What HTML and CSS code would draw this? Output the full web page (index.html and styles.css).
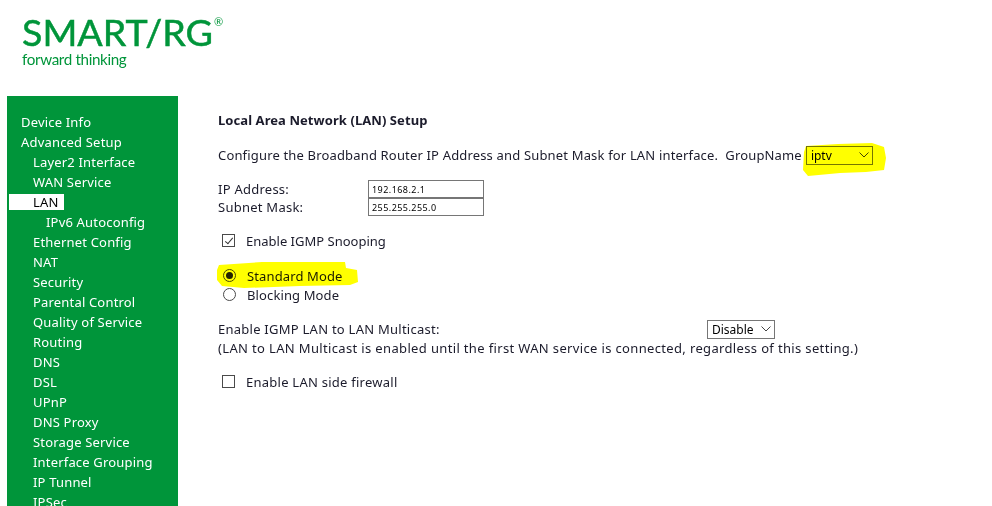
FILE: index.html
```html
<!DOCTYPE html>
<html lang="en">
<head>
<meta charset="utf-8">
<title>Local Area Network (LAN) Setup</title>
<link rel="stylesheet" href="styles.css">
</head>
<body>
<header class="logo">
  <div class="logo-name">SMART/RG<sup class="logo-reg">®</sup></div>
  <div class="logo-tag">forward thinking</div>
</header>
<div class="layout">
  <nav class="menu">
    <a class="l1">Device Info</a>
    <a class="l1">Advanced Setup</a>
    <a class="l2">Layer2 Interface</a>
    <a class="l2">WAN Service</a>
    <a class="l2 active">LAN</a>
    <a class="l3">IPv6 Autoconfig</a>
    <a class="l2">Ethernet Config</a>
    <a class="l2">NAT</a>
    <a class="l2">Security</a>
    <a class="l2">Parental Control</a>
    <a class="l2">Quality of Service</a>
    <a class="l2">Routing</a>
    <a class="l2">DNS</a>
    <a class="l2">DSL</a>
    <a class="l2">UPnP</a>
    <a class="l2">DNS Proxy</a>
    <a class="l2">Storage Service</a>
    <a class="l2">Interface Grouping</a>
    <a class="l2">IP Tunnel</a>
    <a class="l2">IPSec</a>
  </nav>
  <main class="content">
    <h1 class="title">Local Area Network (LAN) Setup</h1>
    <div class="intro">
      <span>Configure the Broadband Router IP Address and Subnet Mask for LAN interface.&nbsp; GroupName</span>
      <span class="sel-wrap sel-group">
        <select class="sel"><option>iptv</option></select>
        <svg class="chev" width="10" height="6" viewBox="0 0 10 6"><path d="M0.5 0.5 L5 5 L9.5 0.5" fill="none" stroke="#444" stroke-width="1"/></svg>
      </span>
    </div>
    <div class="fields">
      <label class="field"><span class="field-label">IP Address:</span><input class="ip" type="text" value="192.168.2.1"></label>
      <label class="field"><span class="field-label">Subnet Mask:</span><input class="ip" type="text" value="255.255.255.0"></label>
    </div>
    <label class="check snoop"><input type="checkbox" checked><span>Enable IGMP Snooping</span></label>
    <div class="modes">
      <label class="check"><input type="radio" name="mode" checked><span>Standard Mode</span></label>
      <label class="check"><input type="radio" name="mode"><span>Blocking Mode</span></label>
    </div>
    <div class="multicast">
      <span class="multicast-label">Enable IGMP LAN to LAN Multicast:</span>
      <span class="sel-wrap sel-multi">
        <select class="sel"><option>Disable</option></select>
        <svg class="chev" width="10" height="6" viewBox="0 0 10 6"><path d="M0.5 0.5 L5 5 L9.5 0.5" fill="none" stroke="#444" stroke-width="1"/></svg>
      </span>
    </div>
    <p class="note">(LAN to LAN Multicast is enabled until the first WAN service is connected, regardless of this setting.)</p>
    <label class="check firewall"><input type="checkbox"><span>Enable LAN side firewall</span></label>
  </main>
</div>
<svg class="marker" width="992" height="506" viewBox="0 0 992 506" aria-hidden="true">
  <path d="M806 146 L838 144 L872 143 L884 147 L886 158 L884 170 L866 172 L840 173 L808 176 L803 170 L804 152 Z" fill="#ffff00"/>
  <path d="M219 265 L262 262 L320 262 L345 262 L346 268 L357 270 L358 282 L350 285 L300 286 L244 288 L222 286 L217 280 L217 270 Z" fill="#ffff00"/>
</svg>
</body>
</html>
```
FILE: styles.css
```css
html, body { margin: 0; padding: 0; height: 506px; overflow: hidden; background: #fff; }
body { font-family: "Noto Sans", "DejaVu Sans", sans-serif; font-size: 13px; color: #1b1b2b; position: relative; }

.logo { height: 96px; box-sizing: border-box; padding: 11px 0 0 22px; color: #00953a; font-family: Lato, sans-serif; }
.logo-name { font-size: 37.6px; line-height: 41px; letter-spacing: 0; font-weight: 400; -webkit-text-stroke: 0.5px #00953a; }
.logo-reg { font-size: 11px; font-weight: 400; vertical-align: 20px; line-height: 0; margin-left: 1px; -webkit-text-stroke: 0; }
.logo-tag { font-size: 15.2px; line-height: 14px; letter-spacing: -0.35px; }

.layout { display: flex; align-items: flex-start; }

.menu { width: 171px; height: 410px; overflow: hidden; margin-left: 7px; background: #00953a; padding-top: 16px; box-sizing: border-box; display: flex; flex-direction: column; flex: none; color: #fff; letter-spacing: 0.18px; }
.menu a { display: block; height: 20px; line-height: 20px; flex: none; }
.l1 { padding-left: 14px; }
.l2 { padding-left: 26px; }
.l3 { padding-left: 39px; }
.menu .active { background: #fff; color: #000; margin-left: 2px; padding-left: 24px; width: 31px; height: 16px; line-height: 16px; margin-top: 2px; margin-bottom: 2px; }

.content { padding: 15px 0 0 40px; flex: 1; }
.title { font-size: 13px; font-weight: 700; line-height: 18px; margin: 0; letter-spacing: 0.07px; }
.intro { display: flex; align-items: center; margin-top: 15px; height: 22px; letter-spacing: 0.165px; }

.sel-wrap { position: relative; display: inline-block; height: 19px; }
.sel-group { width: 67px; margin-left: 4px; }
.sel-multi { width: 68px; }
.sel { appearance: none; -webkit-appearance: none; width: 100%; height: 100%; box-sizing: border-box; font-family: "Noto Sans", sans-serif; font-size: 12px; letter-spacing: 0; background: transparent; border: 1px solid #767676; color: #000; border-radius: 0; padding: 0 0 0 4px; margin: 0; display: block; }
.chev { position: absolute; right: 4px; top: 6px; pointer-events: none; }

.fields { margin-top: 14px; display: flex; flex-direction: column; }
.field { display: flex; align-items: center; height: 18px; letter-spacing: 0.25px; }
.field-label { width: 150px; }
.ip { width: 116px; height: 18px; box-sizing: border-box; border: 1px solid #767676; padding: 0 2px 0 3px; font-family: "Noto Sans", sans-serif; font-size: 9px; letter-spacing: 0.45px; color: #000; }

.check { display: flex; align-items: center; letter-spacing: 0.12px; height: 19px; }
.check input { appearance: none; -webkit-appearance: none; position: relative; box-sizing: border-box; margin: 0 11px 0 4px; width: 13px; height: 13px; border: 1px solid #4a4a4a; background: #fff; flex: none; }
.check input[type="checkbox"]:checked::after { content: ""; position: absolute; left: 3.5px; top: 0.5px; width: 3px; height: 7px; border: solid #333; border-width: 0 1px 1px 0; transform: rotate(40deg); }
.check input[type="radio"] { border-radius: 50%; margin: 0 11px 0 5px; }
.check input[type="radio"]:checked::after { content: ""; position: absolute; left: 2px; top: 2px; width: 7px; height: 7px; border-radius: 50%; background: #222; }
.snoop { margin-top: 15px; letter-spacing: 0; }
.modes { margin-top: 16px; }
.multicast { margin-top: 15px; display: flex; align-items: center; height: 20px; letter-spacing: 0.25px; }
.multicast-label { width: 489px; }
.note { margin: 0; line-height: 18px; letter-spacing: 0.35px; }
.firewall { margin-top: 15px; letter-spacing: 0.25px; }

.marker { position: absolute; left: 0; top: 0; mix-blend-mode: multiply; pointer-events: none; }
```
